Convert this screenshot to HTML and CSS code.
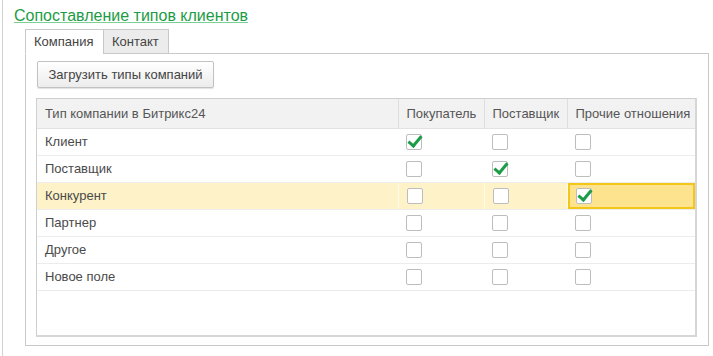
FILE: index.html
```html
<!DOCTYPE html>
<html lang="ru">
<head>
  <meta charset="UTF-8" />
  <title>Сопоставление типов клиентов</title>
  <link rel="stylesheet" href="styles.css">
</head>
<body>
  <div class="page">
    <!-- Заголовок формы -->
    <a class="title" href="#">Сопоставление типов клиентов</a>

    <!-- Закладки -->
    <div class="tabs">
      <div class="tab active">Компания</div>
      <div class="tab">Контакт</div>
    </div>

    <div class="panel">
      <button class="load-button">Загрузить типы компаний</button>

      <!-- Таблица соответствий -->
      <div class="grid">
        <table>
          <colgroup>
            <col class="c-name">
            <col class="c-buyer">
            <col class="c-supplier">
            <col class="c-other">
          </colgroup>
          <thead>
            <tr>
              <th>Тип компании в Битрикс24</th>
              <th>Покупатель</th>
              <th>Поставщик</th>
              <th>Прочие отношения</th>
            </tr>
          </thead>
          <tbody>
            <tr>
              <td>Клиент</td>
              <td><span class="check on"></span></td>
              <td><span class="check"></span></td>
              <td><span class="check"></span></td>
            </tr>
            <tr>
              <td>Поставщик</td>
              <td><span class="check"></span></td>
              <td><span class="check on"></span></td>
              <td><span class="check"></span></td>
            </tr>
            <tr class="current">
              <td>Конкурент</td>
              <td><span class="check"></span></td>
              <td><span class="check"></span></td>
              <td class="focused"><span class="check on"></span></td>
            </tr>
            <tr>
              <td>Партнер</td>
              <td><span class="check"></span></td>
              <td><span class="check"></span></td>
              <td><span class="check"></span></td>
            </tr>
            <tr>
              <td>Другое</td>
              <td><span class="check"></span></td>
              <td><span class="check"></span></td>
              <td><span class="check"></span></td>
            </tr>
            <tr>
              <td>Новое поле</td>
              <td><span class="check"></span></td>
              <td><span class="check"></span></td>
              <td><span class="check"></span></td>
            </tr>
          </tbody>
        </table>
      </div>
    </div>
  </div>
</body>
</html>
```

FILE: styles.css
```css
:root {
  --green: #1c9c46;
  --text: #4a4a4a;
  --border: #c9c9c9;
  --line: #ececec;
  --row-current: #fdf2c8;
  --cell-focus: #fde38e;
  --focus-border: #f5c61a;
}
* { margin: 0; padding: 0; box-sizing: border-box; }
body {
  font-family: "Liberation Sans", Arial, sans-serif;
  font-size: 13px;
  color: var(--text);
  background: #fff;
}
.page {
  margin-left: 2px;
  border-left: 1px solid #d2d2d2;
  height: 356px;
  padding: 6px 0 0 11px;
}
.title {
  display: inline-block;
  font-size: 16px;
  line-height: 19px;
  color: var(--green);
  text-decoration: underline;
  text-decoration-color: #7ccf97;
}
/* Закладки */
.tabs {
  display: flex;
  margin: 4px 0 -1px 11px;
  position: relative;
  z-index: 1;
}
.tab {
  height: 25px;
  line-height: 23px;
  padding: 0 8px;
  border: 1px solid var(--border);
  background: #ececec;
  color: #444;
}
.tab.active {
  width: 78px;
  background: #fff;
  border-bottom-color: #fff;
  border-right: none;
}
.tab + .tab { width: 66px; }
.panel {
  margin-left: 11px;
  width: 684px;
  height: 293px;
  border: 1px solid var(--border);
  padding: 7px 10px;
}
.load-button {
  display: block;
  margin-left: 1px;
  width: 177px;
  height: 27px;
  font-family: inherit;
  font-size: 13px;
  color: #444;
  border: 1px solid #c2c2c2;
  border-radius: 2px;
  background: linear-gradient(#fff, #ececec);
  box-shadow: 0 1px 1px rgba(0, 0, 0, 0.12);
}
.grid {
  margin-top: 10px;
  width: 661px;
  height: 239px;
  border: 1px solid #cfcfcf;
  border-right-width: 2px;
  border-bottom-width: 2px;
  border-right-color: #d6d6d6;
  border-bottom-color: #d6d6d6;
}
table {
  width: 100%;
  border-collapse: collapse;
  table-layout: fixed;
}
.c-name { width: 361px; }
.c-buyer { width: 86px; }
.c-supplier { width: 83px; }
th {
  height: 29px;
  font-weight: normal;
  text-align: left;
  padding: 0 8px;
  background: #f2f2f2;
  color: #555;
  border-left: 1px solid #dedede;
  border-bottom: 1px solid #e2e2e2;
  white-space: nowrap;
}
th:first-child { border-left: none; }
td {
  height: 27px;
  padding: 0 8px;
  border-bottom: 1px solid var(--line);
  vertical-align: middle;
}
.current td {
  background: var(--row-current);
  border-left: 1px solid #fffbe8;
}
.current td:first-child { border-left: none; }
.current td.focused {
  background: var(--cell-focus);
  box-shadow: inset 0 0 0 2px var(--focus-border);
}
/* Флажки */
.check {
  display: block;
  position: relative;
  width: 16px;
  height: 16px;
  border: 1px solid #bdbdbd;
  border-radius: 2px;
  background: #fff;
  margin-top: 1px;
}
.check.on::after {
  content: "";
  position: absolute;
  left: 4px;
  top: -2px;
  width: 5px;
  height: 11px;
  border-right: 3px solid var(--green);
  border-bottom: 3px solid var(--green);
  transform: rotate(40deg);
}
```
